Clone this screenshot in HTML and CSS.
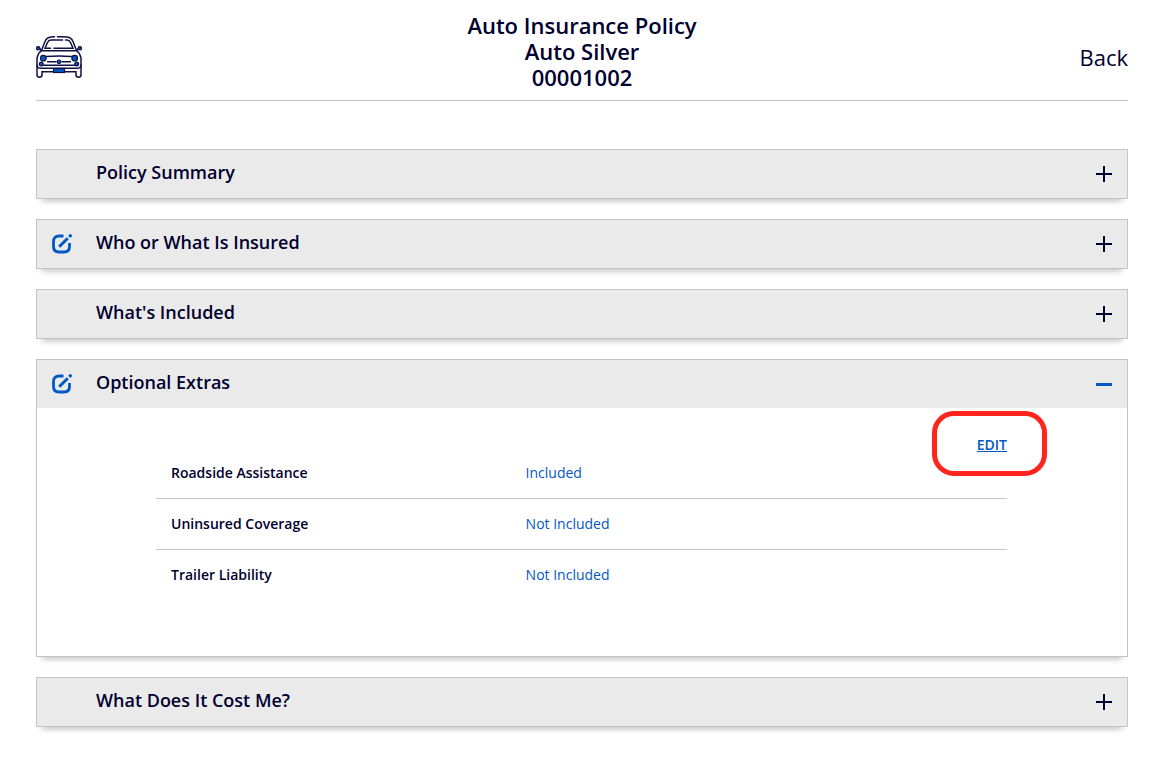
FILE: index.html
```
<!DOCTYPE html>
<html lang="en">
<head>
<meta charset="utf-8">
<meta name="viewport" content="width=device-width, initial-scale=1">
<title>Auto Insurance Policy</title>
<link rel="stylesheet" href="styles.css">
</head>
<body>
<svg class="sprite" aria-hidden="true">
  <symbol id="icon-edit" viewBox="0 0 21 20">
    <path d="M11.500 2H7Q1.500 2 1.500 7.500V12.500Q1.500 18 7 18H12Q17.500 18 17.500 12.500V9" fill="none" stroke="currentColor" stroke-width="2.800"/>
    <path d="M7.200 12.800L15.800 4.200" fill="none" stroke="currentColor" stroke-width="3"/>
    <path d="M17.200 2.900L19.400 0.700" fill="none" stroke="currentColor" stroke-width="3"/>
  </symbol>
  <symbol id="icon-plus" viewBox="0 0 16 16">
    <path d="M0 8H16M8 0V16" fill="none" stroke="currentColor" stroke-width="2"/>
  </symbol>
  <symbol id="icon-minus" viewBox="0 0 16 16">
    <path d="M0 8.500H16" fill="none" stroke="currentColor" stroke-width="3"/>
  </symbol>
</svg>
<header class="header">
  <svg class="car" viewBox="0 0 46 42" aria-hidden="true">
    <g class="car-lines">
      <path d="M5.500 14.500L9 5.500Q10.500 1.500 15 1L18.500.7M21.500.7H25L31 1Q35.500 1.500 37 5.500L40.500 14.500"/>
      <path d="M14.500 12.300H9L11.500 6.500Q12.500 4.200 15 4.100H26.500M29.500 4.100H31Q33.500 4.200 34.500 6.500L37 12.300H18"/>
      <path d="M6 14.800H40M5.500 14.500Q2 17 1 22V29Q1 32.300 5 32.300H41Q45 32.300 45 29V22Q44 17 40.500 14.500"/>
      <path d="M3 12L5.500 14.500M43 12L40.500 14.500"/>
      <path d="M10.500 20.500Q23 19.500 35.500 20.500M11.500 25.800H20M26 25.800H34.500M7.500 29.300H38.500"/>
      <path d="M1 29V39Q1 41.200 3.500 41.200Q6 41.200 6 39V35.800H40V39Q40 41.200 42.500 41.200Q45 41.200 45 39V29"/>
    </g>
    <g class="car-lamps">
      <circle cx="2.200" cy="12.300" r="1.700"/><circle cx="43.800" cy="12.300" r="1.700"/>
      <circle cx="7.300" cy="22.200" r="2.800"/><circle cx="38.700" cy="22.200" r="2.800"/>
      <circle cx="5.300" cy="28" r="1.900"/><circle cx="40.700" cy="28" r="1.900"/>
      <circle cx="23" cy="25.800" r="1.800"/>
      <rect x="17.500" y="32.500" width="11" height="4"/>
    </g>
  </svg>
  <h1 class="title">Auto Insurance Policy<br>Auto Silver<br>00001002</h1>
  <a class="back" href="#">Back</a>
</header>
<main class="accordion">
  <section class="panel">
    <h2 class="panel-heading"><button class="panel-toggle" type="button" aria-expanded="false">
      <span class="panel-icon"></span><span class="panel-title">Policy Summary</span>
      <svg class="sign" aria-hidden="true"><use href="#icon-plus"/></svg>
    </button></h2>
  </section>
  <section class="panel">
    <h2 class="panel-heading"><button class="panel-toggle" type="button" aria-expanded="false">
      <span class="panel-icon"><svg class="edit-icon" aria-hidden="true"><use href="#icon-edit"/></svg></span><span class="panel-title">Who or What Is Insured</span>
      <svg class="sign" aria-hidden="true"><use href="#icon-plus"/></svg>
    </button></h2>
  </section>
  <section class="panel">
    <h2 class="panel-heading"><button class="panel-toggle" type="button" aria-expanded="false">
      <span class="panel-icon"></span><span class="panel-title">What's Included</span>
      <svg class="sign" aria-hidden="true"><use href="#icon-plus"/></svg>
    </button></h2>
  </section>
  <section class="panel">
    <h2 class="panel-heading"><button class="panel-toggle" type="button" aria-expanded="true" aria-controls="extras">
      <span class="panel-icon"><svg class="edit-icon" aria-hidden="true"><use href="#icon-edit"/></svg></span><span class="panel-title">Optional Extras</span>
      <svg class="sign sign-open" aria-hidden="true"><use href="#icon-minus"/></svg>
    </button></h2>
    <div class="panel-body" id="extras">
      <div class="actions"><a class="edit-link" href="#">EDIT</a></div>
      <table class="extras">
        <tbody>
          <tr><th scope="row">Roadside Assistance</th><td>Included</td></tr>
          <tr><th scope="row">Uninsured Coverage</th><td>Not Included</td></tr>
          <tr><th scope="row">Trailer Liability</th><td>Not Included</td></tr>
        </tbody>
      </table>
    </div>
  </section>
  <section class="panel">
    <h2 class="panel-heading"><button class="panel-toggle" type="button" aria-expanded="false">
      <span class="panel-icon"></span><span class="panel-title">What Does It Cost Me?</span>
      <svg class="sign" aria-hidden="true"><use href="#icon-plus"/></svg>
    </button></h2>
  </section>
</main>
</body>
</html>
```
FILE: styles.css
```
* {
  box-sizing: border-box;
}

body {
  margin: 0;
  padding: 12px 40px 32px 36px;
  background: #fff;
  color: #00002e;
  font-family: "Open Sans", "Noto Sans", sans-serif;
}

.sprite {
  position: absolute;
  width: 0;
  height: 0;
}

.header {
  display: grid;
  grid-template-columns: 1fr auto 1fr;
  align-items: center;
  padding-bottom: 10px;
  border-bottom: 1px solid #c4c4c4;
}

.car {
  width: 46px;
  height: 42px;
  margin-top: 12px;
}

.car-lines {
  fill: none;
  stroke: #101044;
  stroke-width: 1.5;
  stroke-linecap: round;
}

.car-lamps {
  fill: #0058c4;
  stroke: #101044;
  stroke-width: 1.2;
}

.title {
  margin: 0;
  font-size: 22px;
  font-weight: 600;
  line-height: 26px;
  text-align: center;
}

.back {
  justify-self: end;
  margin-top: 12px;
  color: inherit;
  font-size: 22px;
  line-height: 26px;
  text-decoration: none;
}

.accordion {
  display: flex;
  flex-direction: column;
  gap: 20px;
  margin-top: 48px;
}

.panel {
  border: 1px solid #c4c4c4;
  background: #fff;
  box-shadow: 0 8px 6px -6px rgba(0, 0, 0, 0.25);
}

.panel-heading {
  margin: 0;
}

.panel-toggle {
  display: flex;
  align-items: center;
  width: 100%;
  height: 48px;
  padding: 0 15px;
  border: 0;
  background: #eaeaea;
  color: inherit;
  font-family: inherit;
  font-size: 18px;
  font-weight: 600;
  line-height: 24px;
  text-align: left;
  cursor: pointer;
}

.panel-icon {
  display: flex;
  flex: none;
  width: 44px;
  color: #0058c4;
}

.edit-icon {
  width: 21px;
  height: 20px;
}

.panel-title {
  flex: 1;
  padding-bottom: 4px;
}

.sign {
  flex: none;
  width: 16px;
  height: 16px;
}

.sign-open {
  color: #0058c4;
}

.panel-body {
  padding: 26px 120px 56px 119px;
  font-size: 14px;
  line-height: 20px;
}

.actions {
  display: flex;
  justify-content: flex-end;
  line-height: 22px;
}

.edit-link {
  position: relative;
  color: #0058c4;
  font-weight: 600;
}

/* Highlight ring round the edit link */
.edit-link::after {
  position: absolute;
  inset: -23px -40px -20px -45px;
  border: 5px solid #ff251d;
  border-radius: 22px;
  content: "";
  pointer-events: none;
}

.extras {
  width: 100%;
  border-collapse: separate;
  border-spacing: 0;
  table-layout: fixed;
}

.extras th,
.extras td {
  padding: 15px;
  text-align: left;
}

.extras th {
  width: 41.67%;
  font-weight: 600;
}

.extras td {
  color: #0058c4;
}

.extras tr:first-child > * {
  padding-top: 7px;
}

.extras tr:not(:last-child) > * {
  border-bottom: 1px solid #c4c4c4;
}
```
